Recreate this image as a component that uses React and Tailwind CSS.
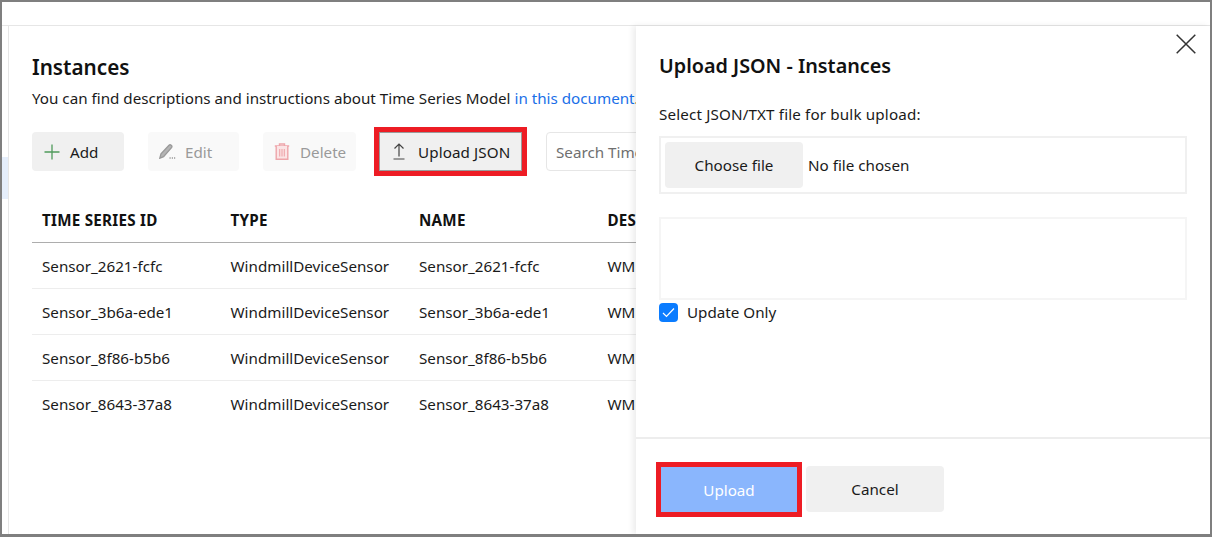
import React from 'react';

const rows = [
  'Sensor_2621-fcfc',
  'Sensor_3b6a-ede1',
  'Sensor_8f86-b5b6',
  'Sensor_8643-37a8',
];

function PlusIcon() {
  return (
    <svg width="16" height="16" viewBox="0 0 16 16" className="shrink-0 text-[#4f9a5b]" fill="none" stroke="currentColor" strokeWidth="1.3">
      <path d="M8 .5v15M.5 8h15" />
    </svg>
  );
}

function EditIcon() {
  return (
    <svg width="17" height="15" viewBox="0 0 17 15" className="shrink-0 text-[#999]" fill="none" stroke="currentColor" strokeWidth="1.3">
      <path d="M.8 14.2l1.2-4.4L10 1.2c1.4-1.2 3.6.6 2.7 2.2L4.6 12.6z" fill="#b4b4b4" />
      <path d="M10.5 14h1.2M12.8 14H14M15 14h1.2" strokeWidth="1.3" />
    </svg>
  );
}

function TrashIcon() {
  return (
    <svg width="16" height="17" viewBox="0 0 16 17" className="shrink-0 text-[#eea5aa]" fill="none" stroke="currentColor" strokeWidth="1.4">
      <path d="M.8 3h14.4M5.5 3V1h5v2" />
      <path d="M2.2 3v13.2h11.6V3" fill="#fbe4e5" />
      <path d="M5.7 6v7.5M8 6v7.5M10.3 6v7.5" strokeWidth="1.1" />
    </svg>
  );
}

function UploadIcon() {
  return (
    <svg width="14" height="17" viewBox="0 0 14 17" className="shrink-0 text-[#444]" fill="none" stroke="currentColor" strokeWidth="1.2">
      <path d="M7 1v12.5M2.5 5.5L7 1l4.5 4.5M1.5 16h11" />
    </svg>
  );
}

function Toolbar() {
  return (
    <div className="flex items-center mt-6 h-[39px]">
      <button className="flex items-center h-full w-[92px] pl-[12px] gap-[10px] rounded-sm bg-[#f0f0f0] text-[#1a1a1a]">
        <PlusIcon />
        <span className="pt-px">Add</span>
      </button>
      <button className="flex items-center h-full w-[91px] ml-6 pl-[11px] gap-[9px] rounded-sm bg-[#f9f9f9] text-[#9a9a9a]">
        <EditIcon />
        <span className="pt-px">Edit</span>
      </button>
      <button className="flex items-center h-full w-[93px] ml-6 pl-[11px] gap-[10px] rounded-sm bg-[#f9f9f9] text-[#9a9a9a]">
        <TrashIcon />
        <span className="pt-px">Delete</span>
      </button>
      <button className="flex items-center h-full w-[143px] ml-[23px] pl-[12px] gap-[12px] border border-[#9a9a9a] bg-[#f0f0f0] text-[#1a1a1a] outline-[5px] outline-[#ed1c24]">
        <UploadIcon />
        <span className="pt-px whitespace-nowrap tracking-[0.1px]">Upload JSON</span>
      </button>
      <input
        className="h-full w-[240px] ml-6 px-[9px] pt-px rounded-sm border border-[#e6e6e6] bg-white placeholder:text-[#6f6f6f]"
        placeholder="Search Time Series"
      />
    </div>
  );
}

function InstanceTable() {
  return (
    <div className="mt-[26px] w-[800px]">
      <div className="grid grid-cols-[188.5px_188.5px_188.5px_234px] items-center h-[46px] pt-px border-b border-[#adadad] font-bold tracking-[0.25px] text-[#111]">
        <div className="pl-[10px]">TIME SERIES ID</div>
        <div className="pl-[10px]">TYPE</div>
        <div className="pl-[10px]">NAME</div>
        <div className="pl-[10px]">DESCRIPTION</div>
      </div>
      {rows.map((id) => (
        <div key={id} className="grid grid-cols-[188.5px_188.5px_188.5px_234px] items-center h-[46px] pt-px border-b border-[#ededed] last:border-b-0 text-[#1a1a1a]">
          <div className="pl-[10px]">{id}</div>
          <div className="pl-[10px]">WindmillDeviceSensor</div>
          <div className="pl-[10px]">{id}</div>
          <div className="pl-[10px]">WM Sensor</div>
        </div>
      ))}
    </div>
  );
}

function UploadDrawer() {
  return (
    <aside className="absolute top-[24px] bottom-0 left-[634px] right-0 flex flex-col bg-white shadow-[-3px_0_6px_rgba(0,0,0,0.08)]">
      <button className="absolute top-[8px] right-[14px] text-[#333]">
        <svg width="20" height="20" viewBox="0 0 20 20" fill="none" stroke="currentColor" strokeWidth="1.5">
          <path d="M.7.7l18.6 18.6M19.3.7L.7 19.3" />
        </svg>
      </button>
      <div className="flex-1 px-[23px]">
        <h2 className="mt-[25px] text-[19.8px] leading-[30px] font-semibold text-[#111]">Upload JSON - Instances</h2>
        <p className="mt-[23px] leading-5 tracking-[0.15px] text-[#1a1a1a]">Select JSON/TXT file for bulk upload:</p>
        <div className="flex items-center h-[58px] mt-3 px-[4px] border-2 border-[#f0f0f0]">
          <button className="h-[46px] w-[138px] rounded-sm bg-[#f0f0f0] text-[#1a1a1a]">Choose file</button>
          <span className="ml-[5px] text-[#1a1a1a]">No file chosen</span>
        </div>
        <div className="h-[83px] mt-[23px] border-2 border-[#f5f5f5]" />
        <label className="flex items-center mt-[2px] h-[21px] gap-[9px] text-[#1a1a1a]">
          <span className="flex items-center justify-center w-[19px] h-[19px] rounded-sm bg-[#0b7cff]">
            <svg width="13" height="11" viewBox="0 0 13 11" fill="none" stroke="white" strokeWidth="1.2">
              <path d="M1 6l3.5 3.5L12 1.5" />
            </svg>
          </span>
          Update Only
        </label>
      </div>
      <div className="flex items-end h-[97px] pl-[25px] pb-[22px] border-t-2 border-[#ededed]">
        <button className="w-[136px] h-[45px] pt-px bg-[#8ab6fd] text-white outline-[5px] outline-[#ed1c24]">Upload</button>
        <button className="w-[138px] h-[46px] pt-px ml-[9px] rounded-sm bg-[#f0f0f0] text-[#1a1a1a]">Cancel</button>
      </div>
    </aside>
  );
}

export default function App() {
  return (
    <div className="relative w-[1212px] h-[537px] overflow-hidden border-2 border-b-[3px] border-[#7f7f7f] bg-white text-[15.2px] font-['Noto_Sans','Open_Sans',sans-serif]">
      <div className="h-6 border-b border-[#e6e6e6]" />
      <div className="flex h-[508px]">
        <div className="w-[7px] pt-[131px] border-r border-[#e6e6e6]">
          <div className="h-[42px] bg-[#e5eefb]" />
        </div>
        <main className="flex-1 pl-[23px] overflow-hidden">
          <h1 className="mt-[26px] text-[20.7px] leading-[30px] font-semibold text-[#111]">Instances</h1>
          <p className="mt-[6px] leading-5 text-[#1a1a1a] whitespace-nowrap">
            You can find descriptions and instructions about Time Series Model <a className="text-[#1a6fe8]">in this document</a>.
          </p>
          <Toolbar />
          <InstanceTable />
        </main>
      </div>
      <UploadDrawer />
    </div>
  );
}
